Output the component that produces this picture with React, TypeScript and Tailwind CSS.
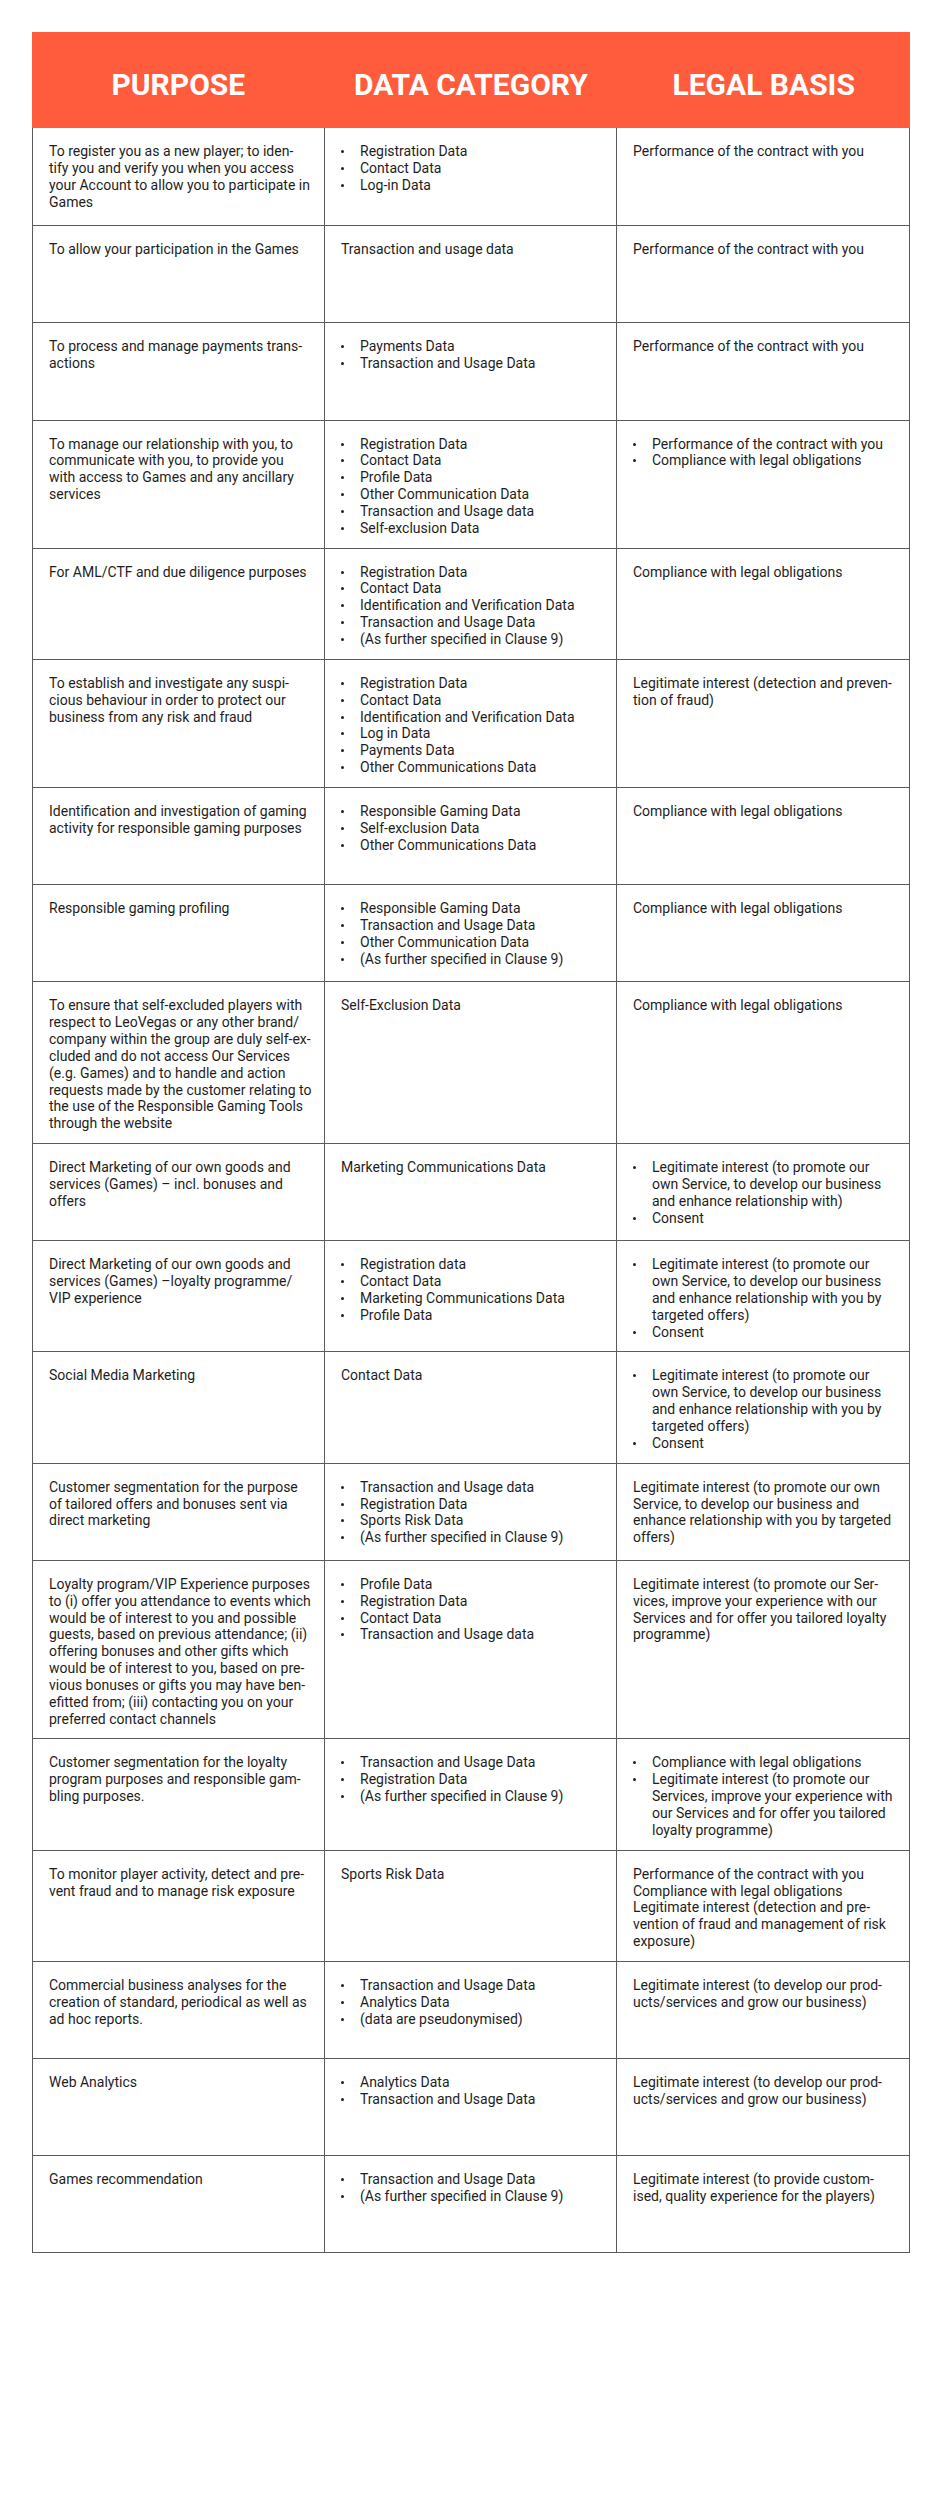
type Cell = { p: string } | { ul: string[] };

type Row = [string, Cell, Cell];

const perf = "Performance of the contract with you";
const comp = "Compliance with legal obligations";
const clause = "(As further specified in Clause 9)";
const promote =
  "Legitimate interest (to promote our\nown Service, to develop our business\nand enhance relationship with you by\ntargeted offers)";
const develop = "Legitimate interest (to develop our prod-\nucts/services and grow our business)";

const rows: Row[] = [
  [
    "To register you as a new player; to iden-\ntify you and verify you when you access\nyour Account to allow you to participate in\nGames",
    { ul: ["Registration Data", "Contact Data", "Log-in Data"] },
    { p: perf },
  ],
  ["To allow your participation in the Games", { p: "Transaction and usage data" }, { p: perf }],
  [
    "To process and manage payments trans-\nactions",
    { ul: ["Payments Data", "Transaction and Usage Data"] },
    { p: perf },
  ],
  [
    "To manage our relationship with you, to\ncommunicate with you, to provide you\nwith access to Games and any ancillary\nservices",
    {
      ul: [
        "Registration Data",
        "Contact Data",
        "Profile Data",
        "Other Communication Data",
        "Transaction and Usage data",
        "Self-exclusion Data",
      ],
    },
    { ul: [perf, comp] },
  ],
  [
    "For AML/CTF and due diligence purposes",
    {
      ul: [
        "Registration Data",
        "Contact Data",
        "Identification and Verification Data",
        "Transaction and Usage Data",
        clause,
      ],
    },
    { p: comp },
  ],
  [
    "To establish and investigate any suspi-\ncious behaviour in order to protect our\nbusiness from any risk and fraud",
    {
      ul: [
        "Registration Data",
        "Contact Data",
        "Identification and Verification Data",
        "Log in Data",
        "Payments Data",
        "Other Communications Data",
      ],
    },
    { p: "Legitimate interest (detection and preven-\ntion of fraud)" },
  ],
  [
    "Identification and investigation of gaming\nactivity for responsible gaming purposes",
    { ul: ["Responsible Gaming Data", "Self-exclusion Data", "Other Communications Data"] },
    { p: comp },
  ],
  [
    "Responsible gaming profiling",
    {
      ul: [
        "Responsible Gaming Data",
        "Transaction and Usage Data",
        "Other Communication Data",
        clause,
      ],
    },
    { p: comp },
  ],
  [
    "To ensure that self-excluded players with\nrespect to LeoVegas or any other brand/\ncompany within the group are duly self-ex-\ncluded and do not access Our Services\n(e.g. Games) and to handle and action\nrequests made by the customer relating to\nthe use of the Responsible Gaming Tools\nthrough the website",
    { p: "Self-Exclusion Data" },
    { p: comp },
  ],
  [
    "Direct Marketing of our own goods and\nservices (Games) – incl. bonuses and\noffers",
    { p: "Marketing Communications Data" },
    {
      ul: [
        "Legitimate interest (to promote our\nown Service, to develop our business\nand enhance relationship with)",
        "Consent",
      ],
    },
  ],
  [
    "Direct Marketing of our own goods and\nservices (Games) –loyalty programme/\nVIP experience",
    { ul: ["Registration data", "Contact Data", "Marketing Communications Data", "Profile Data"] },
    { ul: [promote, "Consent"] },
  ],
  ["Social Media Marketing", { p: "Contact Data" }, { ul: [promote, "Consent"] }],
  [
    "Customer segmentation for the purpose\nof tailored offers and bonuses sent via\ndirect marketing",
    {
      ul: ["Transaction and Usage data", "Registration Data", "Sports Risk Data", clause],
    },
    {
      p: "Legitimate interest (to promote our own\nService, to develop our business and\nenhance relationship with you by targeted\noffers)",
    },
  ],
  [
    "Loyalty program/VIP Experience purposes\nto (i) offer you attendance to events which\nwould be of interest to you and possible\nguests, based on previous attendance; (ii)\noffering bonuses and other gifts which\nwould be of interest to you, based on pre-\nvious bonuses or gifts you may have ben-\nefitted from; (iii) contacting you on your\npreferred contact channels",
    {
      ul: ["Profile Data", "Registration Data", "Contact Data", "Transaction and Usage data"],
    },
    {
      p: "Legitimate interest (to promote our Ser-\nvices, improve your experience with our\nServices and for offer you tailored loyalty\nprogramme)",
    },
  ],
  [
    "Customer segmentation for the loyalty\nprogram purposes and responsible gam-\nbling purposes.",
    { ul: ["Transaction and Usage Data", "Registration Data", clause] },
    {
      ul: [
        comp,
        "Legitimate interest (to promote our\nServices, improve your experience with\nour Services and for offer you tailored\nloyalty programme)",
      ],
    },
  ],
  [
    "To monitor player activity, detect and pre-\nvent fraud and to manage risk exposure",
    { p: "Sports Risk Data" },
    {
      p: "Performance of the contract with you\nCompliance with legal obligations\nLegitimate interest (detection and pre-\nvention of fraud and management of risk\nexposure)",
    },
  ],
  [
    "Commercial business analyses for the\ncreation of standard, periodical as well as\nad hoc reports.",
    { ul: ["Transaction and Usage Data", "Analytics Data", "(data are pseudonymised)"] },
    { p: develop },
  ],
  ["Web Analytics", { ul: ["Analytics Data", "Transaction and Usage Data"] }, { p: develop }],
  [
    "Games recommendation",
    { ul: ["Transaction and Usage Data", clause] },
    { p: "Legitimate interest (to provide custom-\nised, quality experience for the players)" },
  ],
];

function CellBody({ cell }: { cell: Cell }) {
  if ("p" in cell) {
    return <p className="whitespace-pre">{cell.p}</p>;
  }
  return (
    <ul>
      {cell.ul.map((item, i) => (
        <li key={i} className="flex">
          <span className="w-[19px] shrink-0 pt-[7px]">
            <span className="block h-[3px] w-[3px] rounded-full bg-[#222]" />
          </span>
          <span className="whitespace-pre">{item}</span>
        </li>
      ))}
    </ul>
  );
}

export default function App() {
  return (
    <div className="min-h-[2500px] bg-white pt-[32px] font-['Roboto',sans-serif]">
      <div className="ml-[32px] w-[878px]">
        <div className="grid h-[96px] grid-cols-3 items-center bg-[#fe5c3d] text-center text-[30px] font-bold text-white">
          <div className="pt-[8px]">PURPOSE</div>
          <div className="pt-[8px]">DATA CATEGORY</div>
          <div className="pt-[8px]">LEGAL BASIS</div>
        </div>
        <div className="border-x border-b border-[#5a5a5a] text-[14px] leading-[16.85px] text-[#1e1e1e]">
          {rows.map((row, i) => (
            <div
              key={i}
              className="grid min-h-[97.2px] grid-cols-3 border-t border-[#5a5a5a] first:border-t-0"
            >
              <div className="min-w-0 border-r border-[#5a5a5a] pb-[11px] pl-[16px] pr-[6px] pt-[15px]">
                <p className="whitespace-pre">{row[0]}</p>
              </div>
              <div className="min-w-0 border-r border-[#5a5a5a] pb-[11px] pl-[16px] pr-[6px] pt-[15px]">
                <CellBody cell={row[1]} />
              </div>
              <div className="min-w-0 pb-[11px] pl-[16px] pr-[6px] pt-[15px]">
                <CellBody cell={row[2]} />
              </div>
            </div>
          ))}
        </div>
      </div>
    </div>
  );
}
